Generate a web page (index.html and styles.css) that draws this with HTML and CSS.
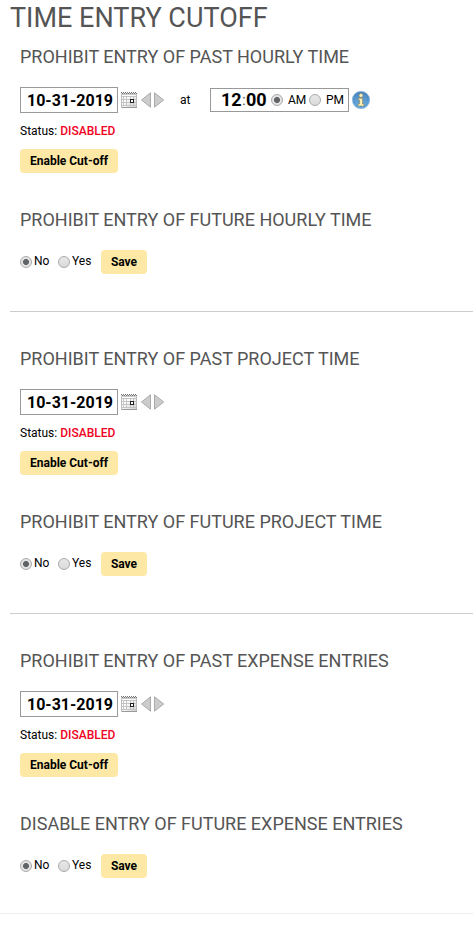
FILE: index.html
```
<!DOCTYPE html>
<html lang="en">
<head>
    <meta charset="utf-8">
    <title>Time Entry Cutoff</title>
    <link rel="stylesheet" href="styles.css">
</head>
<body>
    <!-- shared icons -->
    <svg class="sprite">
        <defs>
            <linearGradient id="cal-bg" x1="0" y1="0" x2="1" y2="1">
                <stop offset=".4" stop-color="#ffffff"/>
                <stop offset="1" stop-color="#cccccc"/>
            </linearGradient>
            <linearGradient id="info-bg" x1="0" y1="0" x2="0" y2="1">
                <stop offset="0" stop-color="#4b84bd"/>
                <stop offset="1" stop-color="#6db3e6"/>
            </linearGradient>
        </defs>
        <symbol id="calendar" viewBox="0 0 16 16">
            <rect x="0" y="1" width="16" height="15" fill="url(#cal-bg)"/>
            <path d="M0 1.5H16M0 2.5H16" stroke="#ccc"/>
            <path d="M0 .5H16M1 1.5H16" stroke="#777" stroke-dasharray="1 1"/>
            <path d="M.5 3V15.5H15.5V3" fill="none" stroke="#bbb"/>
            <path d="M1 15.5H16" stroke="#999"/>
            <path d="M1 4.5H15M1 7.5H15M1 10.5H15M1 13.5H15M2.5 4V14M5.5 4V14M9.5 4V14M12.5 4V14" stroke="#c4c4c4"/>
            <rect x="9.5" y="7.5" width="3" height="3" fill="#fff" stroke="#222"/>
        </symbol>
        <symbol id="prev" viewBox="0 0 11 16">
            <path d="M9.5 .8V15.2L.5 8Z" fill="#ccc" stroke="#aaa"/>
        </symbol>
        <symbol id="next" viewBox="0 0 11 16">
            <path d="M.5 .8V15.2L9.7 8Z" fill="#ccc" stroke="#aaa"/>
        </symbol>
        <symbol id="info" viewBox="0 0 18 18">
            <circle cx="9" cy="9" r="8.7" fill="url(#info-bg)" stroke="#8db4d6" stroke-width=".6"/>
            <circle cx="9" cy="9" r="7" fill="none" stroke="#3777b6" stroke-dasharray="1 2.67"/>
            <path d="M6.3 7.3H10.5V13H12V15H6V13H7.6V9.1H6.3Z" fill="#fff3ba" stroke="#927f4d" stroke-width=".6"/>
            <circle cx="9" cy="4.4" r="1.9" fill="#fff3ba" stroke="#927f4d" stroke-width=".5"/>
        </symbol>
    </svg>

    <h1>TIME ENTRY CUTOFF</h1>

    <!-- Hourly -->
    <div class="section">
        <h2>PROHIBIT ENTRY OF PAST HOURLY TIME</h2>
        <div class="date-row">
            <input type="text" class="date" value="10-31-2019">
            <svg class="calendar"><use href="#calendar"/></svg>
            <svg class="arrow"><use href="#prev"/></svg>
            <svg class="arrow next"><use href="#next"/></svg>
            <span class="at">at</span>
            <div class="time">
                <b>12</b><span class="colon">:</span><b>00</b>
                <input type="radio" name="ampm" id="am" checked><label for="am">AM</label>
                <input type="radio" name="ampm" id="pm"><label for="pm">PM</label>
            </div>
            <svg class="info"><use href="#info"/></svg>
        </div>
        <div class="status">Status: <span class="disabled">DISABLED</span></div>
        <button>Enable Cut-off</button>
        <h2 class="future">PROHIBIT ENTRY OF FUTURE HOURLY TIME</h2>
        <div class="choice-row">
            <input type="radio" name="hourly" id="hourly-no" checked><label for="hourly-no">No</label>
            <input type="radio" name="hourly" id="hourly-yes"><label for="hourly-yes">Yes</label>
            <button class="save">Save</button>
        </div>
    </div>

    <!-- Project -->
    <div class="section">
        <h2>PROHIBIT ENTRY OF PAST PROJECT TIME</h2>
        <div class="date-row">
            <input type="text" class="date" value="10-31-2019">
            <svg class="calendar"><use href="#calendar"/></svg>
            <svg class="arrow"><use href="#prev"/></svg>
            <svg class="arrow next"><use href="#next"/></svg>
        </div>
        <div class="status">Status: <span class="disabled">DISABLED</span></div>
        <button>Enable Cut-off</button>
        <h2 class="future">PROHIBIT ENTRY OF FUTURE PROJECT TIME</h2>
        <div class="choice-row">
            <input type="radio" name="project" id="project-no" checked><label for="project-no">No</label>
            <input type="radio" name="project" id="project-yes"><label for="project-yes">Yes</label>
            <button class="save">Save</button>
        </div>
    </div>

    <!-- Expenses -->
    <div class="section last">
        <h2>PROHIBIT ENTRY OF PAST EXPENSE ENTRIES</h2>
        <div class="date-row">
            <input type="text" class="date" value="10-31-2019">
            <svg class="calendar"><use href="#calendar"/></svg>
            <svg class="arrow"><use href="#prev"/></svg>
            <svg class="arrow next"><use href="#next"/></svg>
        </div>
        <div class="status">Status: <span class="disabled">DISABLED</span></div>
        <button>Enable Cut-off</button>
        <h2 class="future">DISABLE ENTRY OF FUTURE EXPENSE ENTRIES</h2>
        <div class="choice-row">
            <input type="radio" name="expense" id="expense-no" checked><label for="expense-no">No</label>
            <input type="radio" name="expense" id="expense-yes"><label for="expense-yes">Yes</label>
            <button class="save">Save</button>
        </div>
    </div>
    <div class="footer"></div>
</body>
</html>
```
FILE: styles.css
```
* {
    box-sizing: border-box;
}

body {
    margin: 0;
    font-family: Roboto, "Liberation Sans", sans-serif;
    font-size: 12px;
    color: #000;
    background: #fff;
    overflow: hidden;
}

.sprite {
    display: block;
    width: 0;
    height: 0;
}

h1 {
    margin: 0 0 9px 10px;
    font-size: 27px;
    font-weight: 400;
    line-height: 36px;
    color: #555;
    white-space: nowrap;
}

h2 {
    margin: 0 0 18px;
    font-size: 18px;
    font-weight: 400;
    line-height: 24px;
    color: #555;
    white-space: nowrap;
}

.section {
    margin-left: 10px;
    padding: 0 0 37px 10px;
    border-bottom: 1px solid #ccc;
}

.section + .section {
    padding-top: 35px;
}

.section.last {
    padding-bottom: 35px;
    border-bottom: none;
}

.date-row {
    display: flex;
    align-items: center;
    height: 26px;
}

.date {
    width: 98px;
    height: 26px;
    padding: 0 0 0 6px;
    border: 1px solid #999;
    font-family: inherit;
    font-size: 16px;
    font-weight: 700;
    color: #000;
}

.calendar {
    width: 16px;
    height: 16px;
    margin-left: 3px;
}

.arrow {
    width: 11px;
    height: 16px;
    margin-left: 4px;
}

.arrow.next {
    margin-left: 2px;
}

.at {
    width: 30px;
    margin-left: 15px;
}

.time {
    display: flex;
    align-items: center;
    width: 139px;
    height: 24px;
    padding-left: 10px;
    border: 1px solid #999;
}

.time b {
    width: 21px;
    padding-bottom: 2px;
    font-size: 18px;
    font-weight: 700;
}

.colon {
    width: 4px;
    font-size: 14px;
    text-align: center;
    color: #444;
}

.time label {
    width: 21px;
    margin-left: 5px;
}

.info {
    width: 18px;
    height: 18px;
    margin-left: 3px;
}

input[type="radio"] {
    appearance: none;
    flex: none;
    width: 12px;
    height: 12px;
    margin: 0;
    border: 1px solid #aaa;
    border-radius: 50%;
    background: linear-gradient(#e8e8e8, #dadada);
}

input[type="radio"]:checked {
    background: radial-gradient(circle, #606466 2.6px, #e4e4e4 3.4px);
}

.time input[type="radio"] {
    margin-left: 4px;
}

.time label + input[type="radio"] {
    margin-left: 0;
}

.status {
    line-height: 36px;
}

.disabled {
    font-weight: 500;
    color: #f00023;
}

button {
    display: block;
    width: 98px;
    height: 24px;
    padding: 0;
    border: none;
    border-radius: 4px;
    background: #fde8a5;
    font-family: inherit;
    font-size: 12px;
    font-weight: 700;
    color: #000;
}

.future {
    margin-top: 35px;
}

.choice-row {
    display: flex;
    align-items: center;
    height: 24px;
}

.choice-row label {
    width: 26px;
    padding: 0 0 2px 2px;
}

.choice-row .save {
    width: 46px;
    margin-left: 5px;
}

.footer {
    border-top: 1px solid #eee;
}
```
